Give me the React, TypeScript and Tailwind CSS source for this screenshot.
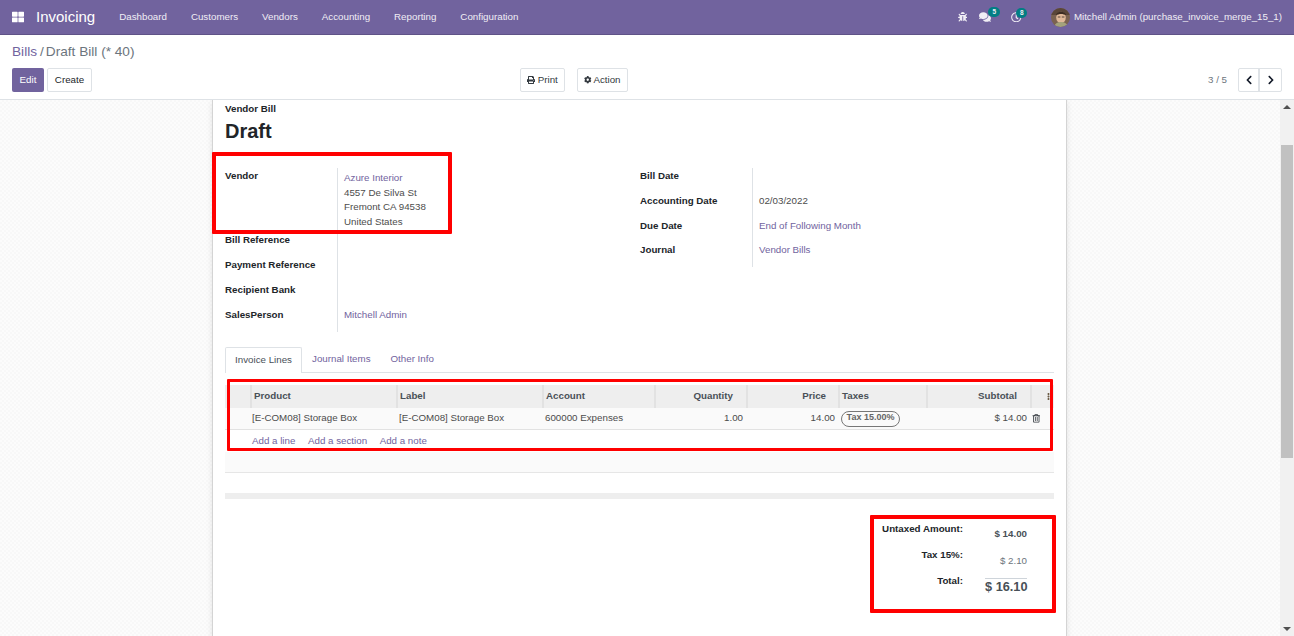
import React from "react";
import {
  FaBug,
  FaChevronLeft,
  FaChevronRight,
  FaCog,
  FaComments,
  FaEllipsisV,
  FaPrint,
  FaRegClock,
  FaRegTrashAlt,
  FaThLarge,
} from "react-icons/fa";

const navItems = ["Dashboard", "Customers", "Vendors", "Accounting", "Reporting", "Configuration"];

function Avatar() {
  return (
    <svg width="19" height="19" viewBox="0 0 19 19" className="rounded-full">
      <rect width="19" height="19" fill="#7a6250" />
      <path d="M0 0h19v7H0z" fill="#5a4638" />
      <ellipse cx="10" cy="9.5" rx="4.8" ry="5.8" fill="#e0b898" />
      <path d="M5 7.5c0-4.500 9.500-5.500 10.200 0-3-2-7.200-2-10.200 0z" fill="#3c2c22" />
      <path d="M6.800 9h2.600M10.800 9h2.600" stroke="#4a3a30" strokeWidth="0.9" />
      <path d="M3 19c1-4 4-5 7-5s6 1 7 5z" fill="#a3a27c" />
    </svg>
  );
}

function Navbar() {
  return (
    <header className="flex h-[35px] shrink-0 items-center border-b border-[#5f5387] bg-[#71639e] text-white">
      <FaThLarge className="ml-[12px] text-[12px]" />
      <span className="ml-[12px] text-[15px]">Invoicing</span>
      <nav className="ml-[24px] flex gap-[24px] text-[9.75px] text-[#f0eef5]">
        {navItems.map((n) => (
          <span key={n}>{n}</span>
        ))}
      </nav>
      <div className="ml-auto flex items-center pr-[12px] text-[#f0eef5]">
        <FaBug className="text-[9.5px]" />
        <span className="relative ml-[12px] mr-[20px]">
          <FaComments className="text-[12px]" />
          <span className="absolute left-[9px] top-[-4px] flex h-[10px] w-[12px] items-center justify-center rounded-full bg-[#017e84] text-[6.5px] font-bold">5</span>
        </span>
        <span className="relative mr-[29px]">
          <FaRegClock className="text-[10.5px]" />
          <span className="absolute left-[5px] top-[-4px] flex h-[10px] w-[11px] items-center justify-center rounded-full bg-[#017e84] text-[6.5px] font-bold">8</span>
        </span>
        <Avatar />
        <span className="ml-[4px] text-[9.75px]">Mitchell Admin (purchase_invoice_merge_15_1)</span>
      </div>
    </header>
  );
}

function ControlPanel() {
  return (
    <section className="h-[65px] shrink-0 border-b border-[#dee2e6] bg-white px-[12px]">
      <div className="pt-[8px] text-[13.65px] leading-[17px] text-[#6c757d]">
        <span className="text-[#71639e]">Bills</span>
        <span className="ml-[3px]">/</span>
        <span className="ml-[2px]">Draft Bill (* 40)</span>
      </div>
      <div className="relative mt-[8px] flex h-[24px] items-center text-[9.75px]">
        <button className="h-[24px] w-[32px] rounded-[2px] bg-[#71639e] text-white">Edit</button>
        <button className="ml-[3px] h-[24px] w-[45px] rounded-[2px] border border-[#dee2e6] bg-white text-[#212529]">Create</button>
        <div className="ml-[428px] flex gap-[12px]">
          <button className="flex h-[24px] w-[45px] items-center justify-center gap-[2.5px] rounded-[2px] border border-[#dee2e6] text-[#343a40]">
            <FaPrint className="text-[8px]" />
            Print
          </button>
          <button className="flex h-[24px] w-[51px] items-center justify-center gap-[1.5px] rounded-[2px] border border-[#dee2e6] text-[#343a40]">
            <FaCog className="text-[7.5px]" />
            Action
          </button>
        </div>
        <div className="ml-auto flex items-center">
          <span className="mr-[11px] text-[#6c757d]">3 / 5</span>
          <div className="flex h-[24px] rounded-[2px] border border-[#dee2e6] text-[#111827]">
            <span className="flex w-[21px] items-center justify-center border-r-2 border-[#dee2e6]">
              <FaChevronLeft className="text-[10px]" />
            </span>
            <span className="flex w-[21px] items-center justify-center">
              <FaChevronRight className="text-[10px]" />
            </span>
          </div>
        </div>
      </div>
    </section>
  );
}

function Field({ label, h = "h-[25px]", children }: { label: string; h?: string; children?: React.ReactNode }) {
  return (
    <div className={`flex ${h}`}>
      <div className="w-[113px] shrink-0 border-r border-[#dee2e6] pt-[1px] text-[9.75px] font-bold leading-[14px] text-[#212529]">{label}</div>
      <div className="pl-[6px] pt-[1px] text-[9.75px] leading-[14.6px] text-[#4c4c4c]">{children}</div>
    </div>
  );
}

const Link = ({ children }: { children: React.ReactNode }) => <span className="text-[#71639e]">{children}</span>;

function HeaderCell({ w, align, children }: { w: string; align?: string; children?: React.ReactNode }) {
  return (
    <div className={`${w} ${align ?? ""} flex h-[23px] shrink-0 items-center border-l-2 border-[#e2e2e2] pl-[2px] text-[9.75px] font-bold text-[#495057]`}>
      {children}
    </div>
  );
}

function InvoiceLines() {
  return (
    <div className="mt-[12px] text-[9.75px]">
      <div className="flex bg-[#eeeeee] pl-[25px]">
        <HeaderCell w="w-[146px]">Product</HeaderCell>
        <HeaderCell w="w-[146px]">Label</HeaderCell>
        <HeaderCell w="w-[112px]">Account</HeaderCell>
        <HeaderCell w="w-[92px]" align="justify-end pr-[13px]">Quantity</HeaderCell>
        <HeaderCell w="w-[92px]" align="justify-end pr-[12px]">Price</HeaderCell>
        <HeaderCell w="w-[88px]">Taxes</HeaderCell>
        <HeaderCell w="w-[104px]" align="justify-end pr-[13px]">Subtotal</HeaderCell>
        <div className="flex h-[23px] w-[24px] shrink-0 items-center justify-end border-l-2 border-[#e2e2e2] pr-[2px] text-[#6b5b45]">
          <FaEllipsisV className="text-[7px]" />
        </div>
      </div>
      <div className="flex h-[22px] items-center border-b border-[#e2e2e2] bg-[#fafafa] pl-[27px] text-[#4c4c4c]">
        <span className="w-[147px]">[E-COM08] Storage Box</span>
        <span className="w-[146px]">[E-COM08] Storage Box</span>
        <span className="w-[110px]">600000 Expenses</span>
        <span className="w-[88px] text-right">1.00</span>
        <span className="w-[92px] text-right">14.00</span>
        <span className="ml-[6px] flex h-[16px] w-[59px] items-center justify-center rounded-full border border-[#777] pb-[2px] text-[9px] font-bold leading-[11px] text-[#666]">Tax 15.00%</span>
        <span className="w-[127px] text-right">$ 14.00</span>
        <FaRegTrashAlt className="ml-[5px] text-[8.5px] text-[#343a40]" />
      </div>
      <div className="flex h-[22px] items-center gap-[12.6px] pl-[27px] text-[#71639e]">
        <span>Add a line</span>
        <span>Add a section</span>
        <span>Add a note</span>
      </div>
      <div className="h-[21px] border-b border-[#e6e6e6] bg-[#fafafa]" />
      <div className="mt-[20px] h-[6px] bg-[#eeeeee]" />
    </div>
  );
}

function Totals() {
  return (
    <div className="mr-[27px] mt-[23px] flex flex-col items-end text-[#212529]">
      <div className="flex h-[26px]">
        <div className="w-[120px] text-right text-[9.75px] font-bold leading-[14px]">Untaxed Amount:</div>
        <div className="w-[64px] pt-[5px] text-right text-[9.75px] font-bold leading-[14px] text-[#495057]">$ 14.00</div>
      </div>
      <div className="flex h-[26px]">
        <div className="w-[120px] text-right text-[9.75px] font-bold leading-[14px]">Tax 15%:</div>
        <div className="w-[64px] pt-[6px] text-right text-[9.75px] leading-[14px] text-[#6c757d]">$ 2.10</div>
      </div>
      <div className="flex h-[40px]">
        <div className="w-[120px] text-right text-[9.75px] font-bold leading-[14px]">Total:</div>
        <div className="ml-[22px] mt-[4px] h-fit w-[42px] whitespace-nowrap border-t border-[#ced4da] text-right text-[12.75px] font-bold leading-[15px] text-[#495057]">
          $ 16.10
        </div>
      </div>
    </div>
  );
}

function Scrollbar() {
  return (
    <div className="flex w-[14px] shrink-0 flex-col items-center bg-[#f1f1f1]">
      <div className="mt-[5px] h-0 w-0 border-x-[4px] border-b-[4px] border-x-transparent border-b-[#505050]" />
      <div className="mt-[36px] h-[313px] w-[12px] bg-[#c1c1c1]" />
      <div className="mb-[5px] mt-auto h-0 w-0 border-x-[4px] border-t-[4px] border-x-transparent border-t-[#505050]" />
    </div>
  );
}

export default function App() {
  return (
    <div className="relative flex h-[636px] w-[1294px] flex-col overflow-hidden bg-white font-['Liberation_Sans',Arial,sans-serif]">
      <Navbar />
      <ControlPanel />
      <main className="flex min-h-0 flex-1">
        <div className="flex flex-1 overflow-hidden bg-[conic-gradient(#f8f8f8_25%,#fcfcfc_0_50%,#f8f8f8_0_75%,#fcfcfc_0)] bg-[length:4px_4px]">
          <div className="ml-[212px] h-[600px] w-[855px] border-x border-[#d4d4d4] bg-white px-[12px] shadow-[0_2px_6px_rgba(0,0,0,0.1)]">
            <div className="pt-[2px] text-[9.75px] font-bold leading-[14px] text-[#212529]">Vendor Bill</div>
            <h1 className="mt-[2px] text-[20px] font-bold leading-[26px] text-[#212529]">Draft</h1>
            <div className="mt-[24px] flex">
              <div className="w-[415px]">
                <Field label="Vendor" h="h-[64px]">
                  <div className="pt-[2px]"><Link>Azure Interior</Link></div>
                  <div>4557 De Silva St</div>
                  <div>Fremont CA 94538</div>
                  <div>United States</div>
                </Field>
                <Field label="Bill Reference" />
                <Field label="Payment Reference" />
                <Field label="Recipient Bank" />
                <Field label="SalesPerson"><Link>Mitchell Admin</Link></Field>
              </div>
              <div className="flex-1">
                <Field label="Bill Date" />
                <Field label="Accounting Date">02/03/2022</Field>
                <Field label="Due Date" h="h-[24px]"><Link>End of Following Month</Link></Field>
                <Field label="Journal"><Link>Vendor Bills</Link></Field>
              </div>
            </div>
            <div className="mt-[15px] flex h-[26px] border-b border-[#dee2e6] text-[9.75px] text-[#71639e]">
              <div className="-mb-px flex w-[77px] items-center justify-center rounded-t-[2px] border border-b-0 border-[#dee2e6] bg-white text-[#495057]">Invoice Lines</div>
              <div className="ml-[10px] flex items-center">Journal Items</div>
              <div className="ml-[20px] flex items-center">Other Info</div>
            </div>
            <InvoiceLines />
            <Totals />
          </div>
        </div>
        <Scrollbar />
      </main>
      <div className="absolute left-[212px] top-[152px] h-[82px] w-[240px] rounded-[1px] border-4 border-[#ff0000]" />
      <div className="absolute left-[227px] top-[379px] h-[72px] w-[826px] rounded-[1px] border-[3px] border-[#ff0000]" />
      <div className="absolute left-[870px] top-[515px] h-[98px] w-[186px] rounded-[1px] border-4 border-[#ff0000]" />
    </div>
  );
}
